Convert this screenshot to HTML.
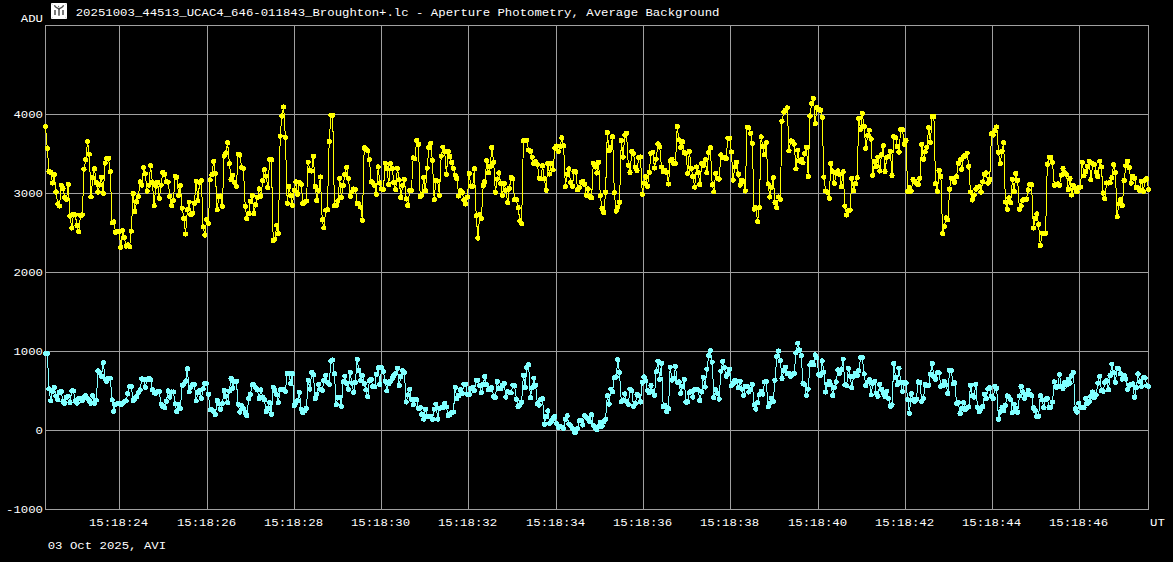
<!DOCTYPE html><html><head><meta charset="utf-8"><title>Light curve</title>
<style>html,body{margin:0;padding:0;background:#000;overflow:hidden}svg{display:block}text{font-family:"Liberation Mono","DejaVu Sans Mono",monospace;font-size:12.35px;fill:#fff}</style></head><body>
<svg width="1173" height="562" viewBox="0 0 1173 562">
<rect width="1173" height="562" fill="#000"/>
<defs><marker id="mffff00" markerWidth="6" markerHeight="6" refX="3" refY="3" markerUnits="userSpaceOnUse"><circle cx="3" cy="3" r="2.6" fill="#ffff00" shape-rendering="crispEdges"/></marker><marker id="m80ffff" markerWidth="6" markerHeight="6" refX="3" refY="3" markerUnits="userSpaceOnUse"><circle cx="3" cy="3" r="2.6" fill="#80ffff" shape-rendering="crispEdges"/></marker></defs>
<g stroke="#a0a0a0" stroke-width="1" fill="none" shape-rendering="crispEdges"><line x1="119.5" y1="25.5" x2="119.5" y2="509.5"/><line x1="207.5" y1="25.5" x2="207.5" y2="509.5"/><line x1="294.5" y1="25.5" x2="294.5" y2="509.5"/><line x1="381.5" y1="25.5" x2="381.5" y2="509.5"/><line x1="468.5" y1="25.5" x2="468.5" y2="509.5"/><line x1="556.5" y1="25.5" x2="556.5" y2="509.5"/><line x1="643.5" y1="25.5" x2="643.5" y2="509.5"/><line x1="730.5" y1="25.5" x2="730.5" y2="509.5"/><line x1="818.5" y1="25.5" x2="818.5" y2="509.5"/><line x1="905.5" y1="25.5" x2="905.5" y2="509.5"/><line x1="992.5" y1="25.5" x2="992.5" y2="509.5"/><line x1="1079.5" y1="25.5" x2="1079.5" y2="509.5"/><line x1="45.5" y1="114.5" x2="1148.5" y2="114.5"/><line x1="45.5" y1="193.5" x2="1148.5" y2="193.5"/><line x1="45.5" y1="272.5" x2="1148.5" y2="272.5"/><line x1="45.5" y1="351.5" x2="1148.5" y2="351.5"/><line x1="45.5" y1="430.5" x2="1148.5" y2="430.5"/><rect x="45.5" y="25.5" width="1103.0" height="484.0"/></g>
<g><rect x="51" y="3" width="16" height="16" rx="0.8" fill="#fff"/><rect x="54" y="10" width="2" height="5" fill="#7c7c7c"/><rect x="58" y="8.5" width="2" height="7.2" fill="#7c7c7c"/><rect x="62" y="10" width="2" height="5" fill="#7c7c7c"/><path d="M54.4 5.3 Q55 7.2 57 7.8 Q58.4 8.2 59 9 Q59.6 8.2 61 7.8 Q63 7.2 63.6 5.3" stroke="#505050" stroke-width="1.35" fill="none"/><circle cx="58.6" cy="6.3" r="0.6" fill="#5a5a5a"/><g fill="#d8d8d8"><circle cx="52.4" cy="4.4" r="0.65"/><circle cx="65.6" cy="4.4" r="0.65"/><circle cx="52.4" cy="17.5" r="0.65"/><circle cx="65.6" cy="17.5" r="0.65"/></g></g>
<text transform="translate(75.7,16.0) scale(1,0.93)">20251003_44513_UCAC4_646-011843_Broughton+.lc - Aperture Photometry, Average Background</text>
<text transform="translate(43.0,22.0) scale(1,0.93)" text-anchor="end">ADU</text>
<text transform="translate(43.0,118.0) scale(1,0.93)" text-anchor="end">4000</text>
<text transform="translate(43.0,197.0) scale(1,0.93)" text-anchor="end">3000</text>
<text transform="translate(43.0,276.0) scale(1,0.93)" text-anchor="end">2000</text>
<text transform="translate(43.0,355.0) scale(1,0.93)" text-anchor="end">1000</text>
<text transform="translate(43.0,434.0) scale(1,0.93)" text-anchor="end">0</text>
<text transform="translate(43.0,513.0) scale(1,0.93)" text-anchor="end">-1000</text>
<text transform="translate(118.5,526.0) scale(1,0.93)" text-anchor="middle">15:18:24</text>
<text transform="translate(206.5,526.0) scale(1,0.93)" text-anchor="middle">15:18:26</text>
<text transform="translate(293.5,526.0) scale(1,0.93)" text-anchor="middle">15:18:28</text>
<text transform="translate(380.5,526.0) scale(1,0.93)" text-anchor="middle">15:18:30</text>
<text transform="translate(467.5,526.0) scale(1,0.93)" text-anchor="middle">15:18:32</text>
<text transform="translate(555.5,526.0) scale(1,0.93)" text-anchor="middle">15:18:34</text>
<text transform="translate(642.5,526.0) scale(1,0.93)" text-anchor="middle">15:18:36</text>
<text transform="translate(729.5,526.0) scale(1,0.93)" text-anchor="middle">15:18:38</text>
<text transform="translate(817.5,526.0) scale(1,0.93)" text-anchor="middle">15:18:40</text>
<text transform="translate(904.5,526.0) scale(1,0.93)" text-anchor="middle">15:18:42</text>
<text transform="translate(991.5,526.0) scale(1,0.93)" text-anchor="middle">15:18:44</text>
<text transform="translate(1078.5,526.0) scale(1,0.93)" text-anchor="middle">15:18:46</text>
<text transform="translate(1150.0,526.0) scale(1,0.93)">UT</text>
<text transform="translate(47.7,549.0) scale(1,0.93)">03 Oct 2025, AVI</text>
<polyline points="45.5,126.5 47.3,148.3 49.0,171.6 50.8,172.4 52.5,183.0 54.3,174.8 56.0,192.0 57.8,204.0 59.5,206.0 61.3,185.3 63.0,188.5 64.8,197.3 66.5,199.3 68.3,184.4 70.0,216.0 71.8,228.0 73.5,214.4 75.3,215.0 77.0,225.7 78.8,231.7 80.5,215.4 82.3,215.0 84.0,169.2 85.8,159.6 87.5,141.6 89.3,154.1 91.0,196.9 92.8,177.7 94.5,168.8 96.3,182.5 98.0,192.0 99.8,184.9 101.5,177.2 103.3,193.3 105.1,163.2 106.8,158.4 108.6,158.4 110.3,171.6 112.1,222.8 113.8,222.0 115.6,232.2 117.3,231.7 119.1,231.7 120.8,247.3 122.6,230.5 124.3,237.7 126.1,246.0 127.8,245.0 129.6,246.8 131.3,231.1 133.1,193.5 134.8,211.5 136.6,201.8 138.3,196.9 140.1,181.8 141.8,185.1 143.6,167.5 145.3,174.0 147.1,191.0 148.8,185.1 150.6,165.6 152.3,182.2 154.1,205.7 155.8,186.1 157.6,182.2 159.3,198.2 161.1,185.1 162.8,172.4 164.6,174.4 166.3,181.8 168.1,182.2 169.9,196.3 171.6,205.7 173.4,200.8 175.1,176.3 176.9,177.3 178.6,195.5 180.4,185.7 182.1,208.2 183.9,218.4 185.6,234.0 187.4,209.6 189.1,202.2 190.9,214.5 192.6,213.1 194.4,203.3 196.1,181.2 197.9,200.8 199.6,182.2 201.4,180.6 203.1,226.8 204.9,235.0 206.6,219.4 208.4,223.3 210.1,179.8 211.9,174.8 213.6,161.4 215.4,173.5 217.1,209.7 218.9,196.8 220.6,196.0 222.4,206.3 224.1,156.2 225.9,152.9 227.6,142.6 229.4,163.7 231.1,179.5 232.9,175.3 234.6,182.6 236.4,186.4 238.1,154.2 239.9,155.0 241.6,167.6 243.4,168.4 245.2,206.3 246.9,218.7 248.7,213.5 250.4,201.4 252.2,195.5 253.9,213.5 255.7,204.5 257.4,197.5 259.2,189.0 260.9,196.0 262.7,180.8 264.4,169.7 266.2,176.1 267.9,187.7 269.7,159.9 271.4,159.9 273.2,240.6 274.9,239.3 276.7,225.1 278.4,233.6 280.2,136.1 281.9,116.0 283.7,107.0 285.4,137.4 287.2,203.2 288.9,186.4 290.7,195.5 292.4,205.3 294.2,190.3 295.9,182.0 297.7,194.3 299.4,182.3 301.2,184.2 302.9,203.4 304.7,202.2 306.4,201.0 308.2,162.1 309.9,170.3 311.7,171.0 313.4,156.1 315.2,186.6 316.9,200.5 318.7,190.2 320.4,177.0 322.2,219.7 323.9,227.9 325.7,210.1 327.4,209.9 329.2,141.5 330.9,115.1 332.7,115.1 334.4,205.8 336.2,205.8 337.9,201.0 339.7,178.2 341.4,197.4 343.2,185.4 344.9,174.6 346.7,167.4 348.4,178.2 350.2,196.2 351.9,191.9 353.7,189.0 355.4,189.5 357.2,203.4 358.9,203.9 360.7,207.0 362.4,220.2 364.2,147.7 365.9,149.4 367.7,150.6 369.4,159.7 371.2,181.8 372.9,183.0 374.7,185.4 376.4,194.3 378.2,166.9 379.9,183.0 381.7,189.0 383.4,189.6 385.2,163.3 386.9,168.5 388.7,184.5 390.4,163.7 392.2,168.5 393.9,182.6 395.7,189.6 397.4,168.5 399.2,180.0 400.9,197.6 402.7,185.3 404.4,179.4 406.2,198.9 407.9,205.6 409.7,190.6 411.4,190.6 413.2,158.0 414.9,158.8 416.7,140.4 418.4,144.1 420.2,196.5 421.9,194.9 423.7,177.3 425.4,190.9 427.2,168.1 428.9,147.6 430.7,143.3 432.4,160.4 434.2,199.7 435.9,180.5 437.7,181.0 439.4,195.4 441.2,156.1 442.9,147.1 444.7,151.6 446.4,174.4 448.2,151.3 449.9,156.4 451.7,162.5 453.4,168.5 455.2,175.2 456.9,178.6 458.7,196.0 460.4,190.6 462.2,192.8 463.9,200.0 465.7,204.0 467.4,197.0 469.2,173.6 470.9,186.1 472.7,186.1 474.4,168.9 476.2,215.9 477.9,238.0 479.7,214.9 481.4,218.3 483.2,185.6 484.9,181.7 486.7,160.7 488.4,172.9 490.2,166.4 491.9,147.4 493.7,162.3 495.4,192.4 497.2,179.1 498.9,172.9 500.7,183.2 502.4,195.4 504.2,183.6 505.9,190.3 507.7,202.6 509.4,188.3 511.2,177.4 512.9,178.7 514.6,199.9 516.4,199.9 518.1,207.7 519.9,221.0 521.6,223.7 523.4,140.6 525.1,140.6 526.9,140.2 528.6,150.0 530.4,151.1 532.1,157.2 533.9,163.7 535.6,161.7 537.4,164.4 539.1,178.1 540.9,178.7 542.6,165.8 544.4,178.7 546.1,190.3 547.9,163.7 549.6,174.0 551.4,163.1 553.1,169.9 554.9,148.0 556.6,146.0 558.4,151.5 560.1,146.3 561.9,137.8 563.6,145.8 565.4,186.7 567.1,174.3 568.9,168.9 570.6,182.3 572.4,186.2 574.1,171.6 575.8,172.0 577.6,189.9 579.3,187.3 581.1,182.3 582.8,181.4 584.6,184.4 586.3,195.3 588.1,188.9 589.8,196.5 591.6,197.8 593.3,163.2 595.1,166.6 596.8,173.0 598.6,162.2 600.3,195.6 602.1,208.4 603.8,212.5 605.6,192.1 607.3,132.5 609.1,150.6 610.8,147.6 612.6,136.9 614.3,192.6 616.1,211.1 617.8,207.2 619.5,202.2 621.3,140.5 623.0,157.0 624.8,135.1 626.5,133.3 628.3,165.4 630.0,172.5 631.8,151.5 633.5,153.5 635.3,167.2 637.0,170.4 638.8,157.4 640.5,157.0 642.3,194.4 644.0,183.2 645.8,176.6 647.5,186.2 649.3,172.3 651.0,153.3 652.8,152.4 654.5,168.0 656.2,159.1 658.0,143.8 659.7,146.7 661.5,167.0 663.2,171.9 665.0,170.2 666.7,172.3 668.5,184.0 670.2,160.9 672.0,159.5 673.7,163.9 675.5,163.4 677.2,126.6 679.0,139.9 680.7,147.4 682.5,141.7 684.2,152.4 686.0,153.3 687.7,173.4 689.4,151.5 691.2,168.4 692.9,176.4 694.7,187.1 696.4,167.0 698.2,172.8 699.9,184.4 701.7,163.9 703.4,165.2 705.2,159.8 706.9,172.8 708.7,152.9 710.4,147.9 712.2,184.8 713.9,191.9 715.7,173.2 717.4,178.2 719.1,179.1 720.9,155.0 722.6,157.7 724.4,157.7 726.1,158.6 727.9,138.1 729.6,138.1 731.4,152.0 733.1,180.1 734.9,166.9 736.6,162.1 738.4,174.1 740.1,185.0 741.9,180.1 743.6,181.3 745.3,191.0 747.1,127.3 748.8,127.7 750.6,133.3 752.3,143.4 754.1,209.0 755.8,207.8 757.6,221.7 759.3,207.8 761.1,136.9 762.8,146.5 764.6,154.9 766.3,142.9 768.1,183.8 769.8,197.0 771.5,187.4 773.3,177.7 775.0,202.5 776.8,207.8 778.5,197.0 780.3,199.4 782.0,121.3 783.8,112.1 785.5,110.4 787.3,108.0 789.0,150.8 790.8,141.0 792.5,141.7 794.2,144.1 796.0,168.8 797.7,150.1 799.5,160.9 801.2,159.7 803.0,162.8 804.7,153.7 806.5,147.2 808.2,176.5 810.0,116.0 811.7,103.2 813.5,98.4 815.2,123.7 816.9,107.3 818.7,109.2 820.4,110.1 822.2,117.2 823.9,177.2 825.7,191.0 827.4,192.1 829.2,198.3 830.9,163.4 832.7,171.7 834.4,183.4 836.1,173.2 837.9,171.0 839.6,174.3 841.4,186.6 843.1,171.7 844.9,206.1 846.6,215.0 848.4,210.6 850.1,210.1 851.9,178.3 853.6,190.6 855.4,183.9 857.1,177.7 858.8,118.3 860.6,129.4 862.3,113.4 864.1,126.6 865.8,148.3 867.6,135.4 869.3,130.1 871.1,139.0 872.8,175.4 874.6,161.2 876.3,166.6 878.0,157.2 879.8,171.0 881.5,154.6 883.3,145.7 885.0,171.7 886.8,157.2 888.5,156.6 890.3,151.2 892.0,175.4 893.8,136.8 895.5,137.7 897.2,146.6 899.0,152.1 900.7,129.4 902.5,129.9 904.2,144.3 906.0,140.6 907.7,191.5 909.5,187.9 911.2,191.1 913.0,179.5 914.7,181.4 916.4,183.1 918.2,184.8 919.9,178.3 921.7,144.2 923.4,159.1 925.2,151.9 926.9,147.1 928.7,127.8 930.4,142.3 932.2,116.5 933.9,116.5 935.6,183.8 937.4,191.5 939.1,170.4 940.9,176.4 942.6,233.6 944.4,226.4 946.1,218.0 947.9,219.9 949.6,189.1 951.3,178.3 953.1,178.3 954.8,182.4 956.6,176.6 958.3,163.2 960.1,159.8 961.8,169.4 963.6,156.7 965.3,155.5 967.1,153.1 968.8,166.3 970.5,192.0 972.3,200.0 974.0,195.1 975.8,189.1 977.5,187.2 979.3,186.7 981.0,192.0 982.8,181.9 984.5,174.2 986.2,173.0 988.0,183.1 989.7,179.5 991.5,133.8 993.2,135.0 995.0,130.6 996.7,127.0 998.5,152.3 1000.2,163.8 1002.0,151.1 1003.7,142.6 1005.4,202.0 1007.2,209.2 1008.9,197.9 1010.7,202.7 1012.4,179.4 1014.2,191.4 1015.9,173.4 1017.7,180.4 1019.4,209.2 1021.1,205.9 1022.9,200.3 1024.6,199.1 1026.4,199.1 1028.1,190.0 1029.9,184.7 1031.6,184.7 1033.4,228.0 1035.1,218.4 1036.8,214.0 1038.6,224.4 1040.3,245.5 1042.1,233.3 1043.8,233.3 1045.6,233.3 1047.3,164.3 1049.1,157.1 1050.8,157.5 1052.5,162.4 1054.3,185.2 1056.0,184.7 1057.8,184.0 1059.5,185.2 1061.3,175.1 1063.0,168.4 1064.8,172.7 1066.5,174.6 1068.3,189.5 1070.0,178.7 1071.7,195.0 1073.5,185.4 1075.2,188.3 1077.0,191.9 1078.7,187.8 1080.5,187.0 1082.2,162.2 1084.0,175.8 1085.7,171.5 1087.4,166.2 1089.2,161.1 1090.9,179.8 1092.7,163.8 1094.4,164.6 1096.2,172.2 1097.9,176.6 1099.7,161.1 1101.4,167.0 1103.1,193.0 1104.9,198.7 1106.6,183.0 1108.4,183.0 1110.1,182.7 1111.9,177.8 1113.6,164.6 1115.4,172.6 1117.1,216.7 1118.8,203.9 1120.6,199.9 1122.3,205.9 1124.1,180.6 1125.8,165.9 1127.6,161.1 1129.3,167.8 1131.1,183.0 1132.8,176.3 1134.5,178.2 1136.3,187.5 1138.0,187.9 1139.8,190.3 1141.5,181.4 1143.3,191.4 1145.0,180.3 1146.8,178.6 1148.5,189.5" fill="none" stroke="#ffff00" stroke-width="1" shape-rendering="crispEdges" marker-start="url(#mffff00)" marker-mid="url(#mffff00)" marker-end="url(#mffff00)"/>
<polyline points="45.5,353.6 47.3,353.6 49.0,388.9 50.8,400.9 52.5,391.3 54.3,387.3 56.0,396.1 57.8,399.6 59.5,392.1 61.3,391.3 63.0,401.7 64.8,403.3 66.5,397.4 68.3,396.1 70.0,402.5 71.8,391.0 73.5,391.0 75.3,400.6 77.0,403.0 78.8,398.5 80.5,398.5 82.3,400.6 84.0,397.7 85.8,395.8 87.5,398.5 89.3,400.9 91.0,403.3 92.8,395.8 94.5,403.3 96.3,400.1 98.0,370.9 99.8,372.9 101.5,376.1 103.3,362.9 105.1,379.3 106.8,381.3 108.6,378.1 110.3,378.1 112.1,399.8 113.8,411.3 115.6,404.1 117.3,403.6 119.1,403.6 120.8,404.9 122.6,403.3 124.3,401.7 126.1,400.9 127.8,393.7 129.6,386.5 131.3,386.8 133.1,400.6 134.8,398.5 136.6,396.6 138.3,392.7 140.1,389.9 141.8,378.9 143.6,379.9 145.3,387.3 147.1,379.6 148.8,378.5 150.6,379.6 152.3,389.9 154.1,392.7 155.8,393.4 157.6,391.6 159.3,391.6 161.1,404.1 162.8,406.3 164.6,407.7 166.3,401.3 168.1,391.0 169.9,397.0 171.6,392.0 173.4,392.0 175.1,403.8 176.9,411.5 178.6,404.1 180.4,408.4 182.1,385.3 183.9,384.2 185.6,381.3 187.4,368.9 189.1,391.7 190.9,387.3 192.6,384.5 194.4,384.5 196.1,400.9 197.9,392.5 199.6,390.3 201.4,398.4 203.1,388.7 204.9,383.5 206.6,383.5 208.4,394.2 210.1,409.8 211.9,409.8 213.6,411.3 215.4,414.8 217.1,400.6 218.9,403.8 220.6,409.1 222.4,403.8 224.1,390.6 225.9,396.3 227.6,402.7 229.4,391.0 231.1,378.5 232.9,388.2 234.6,381.6 236.4,381.1 238.1,404.1 239.9,412.0 241.6,405.6 243.4,408.4 245.2,412.7 246.9,415.5 248.7,398.9 250.4,394.4 252.2,384.9 253.9,384.6 255.7,387.7 257.4,389.9 259.2,398.4 260.9,389.9 262.7,397.0 264.4,399.9 266.2,411.5 267.9,408.4 269.7,402.7 271.4,414.1 273.2,387.3 274.9,390.6 276.7,394.9 278.4,402.7 280.2,389.9 281.9,389.5 283.7,389.2 285.4,391.3 287.2,373.5 288.9,373.1 290.7,383.5 292.4,373.9 294.2,405.6 295.9,402.7 297.7,400.6 299.4,392.5 301.2,409.1 302.9,412.7 304.7,411.0 306.4,408.4 308.2,380.3 309.9,389.2 311.7,372.4 313.4,374.9 315.2,398.4 316.9,394.2 318.7,384.2 320.4,389.2 322.2,390.3 323.9,380.6 325.7,375.2 327.4,382.3 329.2,384.2 330.9,361.0 332.7,360.0 334.4,373.9 336.2,404.8 337.9,397.7 339.7,397.4 341.4,406.5 343.2,381.8 344.9,376.1 346.7,383.2 348.4,389.4 350.2,372.4 351.9,383.2 353.7,392.3 355.4,382.3 357.2,359.2 358.9,370.6 360.7,380.9 362.4,375.2 364.2,383.5 365.9,389.9 367.7,396.6 369.4,380.6 371.2,379.2 372.9,386.6 374.7,386.6 376.4,374.2 378.2,367.8 379.9,384.6 381.7,367.8 383.4,371.4 385.2,381.3 386.9,390.9 388.7,383.5 390.4,381.3 392.2,378.2 393.9,375.6 395.7,373.2 397.4,368.1 399.2,385.6 400.9,376.6 402.7,370.9 404.4,372.8 406.2,402.0 407.9,394.9 409.7,389.2 411.4,399.1 413.2,404.8 414.9,399.9 416.7,399.6 418.4,408.4 420.2,407.7 421.9,414.4 423.7,419.1 425.4,409.1 427.2,416.2 428.9,416.2 430.7,416.2 432.4,419.1 434.2,409.1 435.9,404.1 437.7,419.1 439.4,408.4 441.2,407.7 442.9,407.7 444.7,403.4 446.4,407.0 448.2,415.5 449.9,414.8 451.7,412.7 453.4,412.0 455.2,387.3 456.9,398.4 458.7,395.6 460.4,389.9 462.2,393.4 463.9,384.2 465.7,384.2 467.4,394.2 469.2,394.2 470.9,388.7 472.7,387.3 474.4,390.6 476.2,380.2 477.9,380.2 479.7,385.6 481.4,392.7 483.2,384.2 484.9,376.4 486.7,384.9 488.4,389.9 490.2,389.2 491.9,387.7 493.7,396.3 495.4,397.7 497.2,381.6 498.9,388.6 500.7,388.6 502.4,385.1 504.2,383.6 505.9,397.2 507.7,391.5 509.4,392.2 511.2,392.9 512.9,385.1 514.6,385.8 516.4,399.3 518.1,406.4 519.9,405.0 521.6,402.2 523.4,375.1 525.1,387.5 526.9,367.3 528.6,364.8 530.4,397.9 532.1,387.9 533.9,378.2 535.6,385.1 537.4,403.6 539.1,405.0 540.9,399.3 542.6,398.6 544.4,424.2 546.1,416.4 547.9,411.0 549.6,423.5 551.4,421.4 553.1,418.5 554.9,416.4 556.6,423.5 558.4,427.1 560.1,426.4 561.9,427.1 563.6,428.5 565.4,419.3 567.1,415.7 568.9,424.2 570.6,425.7 572.4,428.5 574.1,432.1 575.8,432.1 577.6,428.5 579.3,420.7 581.1,420.7 582.8,425.0 584.6,415.7 586.3,417.1 588.1,418.6 589.8,421.6 591.6,414.8 593.3,425.4 595.1,427.6 596.8,429.9 598.6,426.9 600.3,422.3 602.1,426.1 603.8,421.6 605.6,419.3 607.3,395.6 609.1,404.2 610.8,389.1 612.6,391.6 614.3,377.7 616.1,377.0 617.8,359.6 619.5,372.4 621.3,401.9 623.0,400.1 624.8,393.9 626.5,401.2 628.3,404.2 630.0,389.1 631.8,390.9 633.5,406.2 635.3,403.4 637.0,394.4 638.8,395.9 640.5,401.9 642.3,382.3 644.0,377.0 645.8,380.7 647.5,390.6 649.3,392.8 651.0,385.6 652.8,391.6 654.5,395.1 656.2,371.7 658.0,361.1 659.7,379.2 661.5,363.3 663.2,406.5 665.0,405.7 666.7,411.5 668.5,408.7 670.2,367.1 672.0,380.0 673.7,378.5 675.5,366.4 677.2,382.3 679.0,382.0 680.7,393.4 682.5,386.3 684.2,379.2 686.0,402.0 687.7,402.0 689.4,392.7 691.2,391.6 692.9,397.0 694.7,389.9 696.4,389.1 698.2,389.9 699.9,400.5 701.7,391.6 703.4,377.3 705.2,387.0 706.9,369.2 708.7,355.7 710.4,350.7 712.2,362.1 713.9,397.7 715.7,389.9 717.4,393.4 719.1,399.1 720.9,371.1 722.6,361.4 724.4,367.8 726.1,376.3 727.9,373.9 729.6,369.2 731.4,385.6 733.1,383.4 734.9,380.6 736.6,381.0 738.4,387.7 740.1,381.3 741.9,389.1 743.6,395.3 745.3,386.3 747.1,386.3 748.8,392.0 750.6,389.1 752.3,384.2 754.1,404.8 755.8,409.1 757.6,402.7 759.3,394.8 761.1,391.3 762.8,394.1 764.6,382.0 766.3,381.7 768.1,406.9 769.8,403.4 771.5,398.4 773.3,401.2 775.0,380.3 776.8,356.4 778.5,351.0 780.3,360.9 782.0,378.4 783.8,370.6 785.5,367.1 787.3,373.5 789.0,373.5 790.8,376.3 792.5,374.2 794.2,373.5 796.0,352.8 797.7,343.1 799.5,350.0 801.2,355.7 803.0,383.4 804.7,384.9 806.5,395.5 808.2,389.1 810.0,364.9 811.7,362.1 813.5,364.9 815.2,354.9 816.9,357.8 818.7,374.9 820.4,375.6 822.2,360.9 823.9,372.3 825.7,392.0 827.4,384.1 829.2,381.3 830.9,384.9 832.7,395.5 834.4,387.7 836.1,382.0 837.9,369.9 839.6,373.2 841.4,369.9 843.1,359.2 844.9,384.9 846.6,385.6 848.4,368.5 850.1,376.3 851.9,387.7 853.6,376.3 855.4,373.5 857.1,375.6 858.8,370.6 860.6,357.4 862.3,357.4 864.1,373.9 865.8,385.6 867.6,382.0 869.3,379.9 871.1,394.8 872.8,383.4 874.6,381.3 876.3,393.4 878.0,396.3 879.8,384.2 881.5,389.1 883.3,393.4 885.0,396.3 886.8,391.3 888.5,398.4 890.3,406.2 892.0,404.8 893.8,363.5 895.5,377.3 897.2,384.9 899.0,368.2 900.7,382.0 902.5,391.6 904.2,383.0 906.0,383.0 907.7,399.8 909.5,413.4 911.2,393.8 913.0,399.8 914.7,401.3 916.4,399.1 918.2,382.0 919.9,382.5 921.7,401.3 923.4,398.4 925.2,384.4 926.9,385.3 928.7,385.3 930.4,374.2 932.2,363.5 933.9,376.3 935.6,379.2 937.4,372.8 939.1,372.8 940.9,386.3 942.6,385.6 944.4,381.3 946.1,384.9 947.9,393.4 949.6,370.2 951.3,370.2 953.1,383.7 954.8,382.7 956.6,403.4 958.3,402.7 960.1,413.4 961.8,408.4 963.6,402.7 965.3,409.8 967.1,407.7 968.8,407.0 970.5,385.3 972.3,395.6 974.0,397.0 975.8,384.2 977.5,407.4 979.3,411.7 981.0,408.4 982.8,406.5 984.5,394.1 986.2,398.8 988.0,388.9 989.7,387.7 991.5,396.3 993.2,398.4 995.0,386.3 996.7,388.4 998.5,419.1 1000.2,412.0 1002.0,407.4 1003.7,410.5 1005.4,405.5 1007.2,396.0 1008.9,397.0 1010.7,399.8 1012.4,412.7 1014.2,404.1 1015.9,408.4 1017.7,412.2 1019.4,396.0 1021.1,386.6 1022.9,392.0 1024.6,398.4 1026.4,394.9 1028.1,390.3 1029.9,394.1 1031.6,395.6 1033.4,407.7 1035.1,410.5 1036.8,416.2 1038.6,416.2 1040.3,395.6 1042.1,399.8 1043.8,407.7 1045.6,399.8 1047.3,398.4 1049.1,407.4 1050.8,407.4 1052.5,402.0 1054.3,382.0 1056.0,387.0 1057.8,387.0 1059.5,374.5 1061.3,386.3 1063.0,388.4 1064.8,382.7 1066.5,384.9 1068.3,379.2 1070.0,383.2 1071.7,375.6 1073.5,372.4 1075.2,408.8 1077.0,412.0 1078.7,403.1 1080.5,407.4 1082.2,407.7 1084.0,407.7 1085.7,398.4 1087.4,403.4 1089.2,401.3 1090.9,396.3 1092.7,392.0 1094.4,397.7 1096.2,394.9 1097.9,383.2 1099.7,376.3 1101.4,390.6 1103.1,391.3 1104.9,382.3 1106.6,380.6 1108.4,389.9 1110.1,375.6 1111.9,364.2 1113.6,372.8 1115.4,382.5 1117.1,368.2 1118.8,368.8 1120.6,373.9 1122.3,379.1 1124.1,375.6 1125.8,379.1 1127.6,389.3 1129.3,385.3 1131.1,384.2 1132.8,384.0 1134.5,397.3 1136.3,387.6 1138.0,373.9 1139.8,381.9 1141.5,386.5 1143.3,377.9 1145.0,377.9 1146.8,385.9 1148.5,386.5" fill="none" stroke="#80ffff" stroke-width="1" shape-rendering="crispEdges" marker-start="url(#m80ffff)" marker-mid="url(#m80ffff)" marker-end="url(#m80ffff)"/>
</svg></body></html>
